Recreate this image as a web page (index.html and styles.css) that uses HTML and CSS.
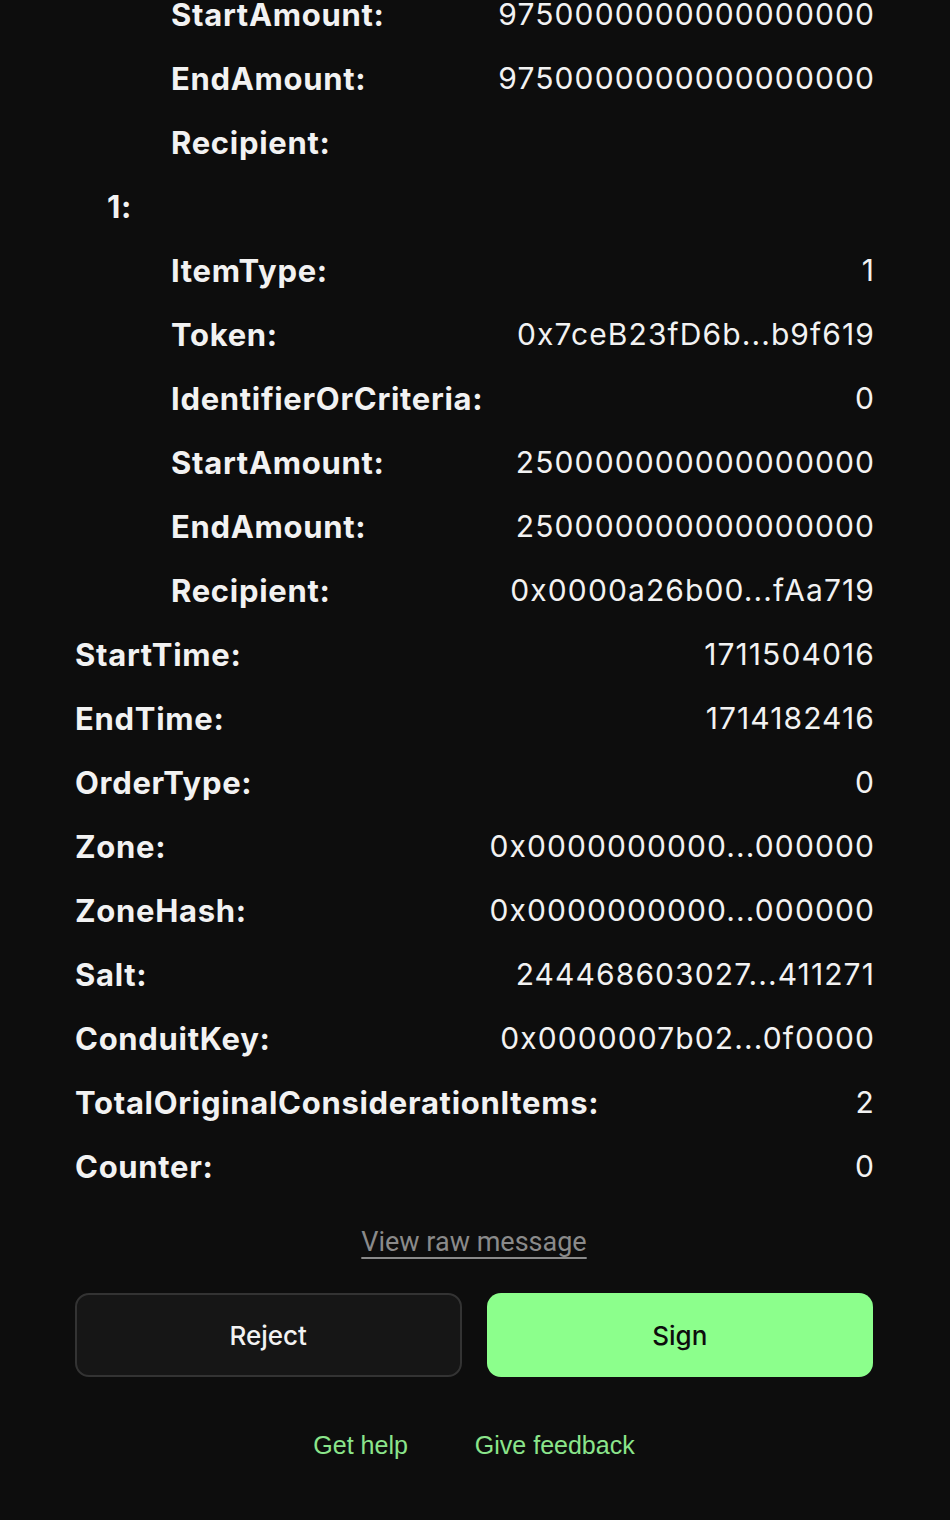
FILE: index.html
```html
<!DOCTYPE html>
<html lang="en">
<head>
    <meta charset="UTF-8">
    <meta name="viewport" content="width=device-width, initial-scale=1.0">
    <title>Sign message</title>
    <link rel="stylesheet" href="styles.css">
</head>
<body>
    <div class="page">
        <!-- Message fields -->
        <div class="fields">
            <div class="row level-2"><span class="label">StartAmount:</span><span class="value">9750000000000000000</span></div>
            <div class="row level-2"><span class="label">EndAmount:</span><span class="value">9750000000000000000</span></div>
            <div class="row level-2"><span class="label">Recipient:</span><span class="value"></span></div>
            <div class="row level-1"><span class="label">1:</span><span class="value"></span></div>
            <div class="row level-2"><span class="label">ItemType:</span><span class="value">1</span></div>
            <div class="row level-2"><span class="label">Token:</span><span class="value">0x7ceB23fD6b...b9f619</span></div>
            <div class="row level-2"><span class="label">IdentifierOrCriteria:</span><span class="value">0</span></div>
            <div class="row level-2"><span class="label">StartAmount:</span><span class="value">250000000000000000</span></div>
            <div class="row level-2"><span class="label">EndAmount:</span><span class="value">250000000000000000</span></div>
            <div class="row level-2"><span class="label">Recipient:</span><span class="value">0x0000a26b00...fAa719</span></div>
            <div class="row"><span class="label">StartTime:</span><span class="value">1711504016</span></div>
            <div class="row"><span class="label">EndTime:</span><span class="value">1714182416</span></div>
            <div class="row"><span class="label">OrderType:</span><span class="value">0</span></div>
            <div class="row"><span class="label">Zone:</span><span class="value">0x0000000000...000000</span></div>
            <div class="row"><span class="label">ZoneHash:</span><span class="value">0x0000000000...000000</span></div>
            <div class="row"><span class="label">Salt:</span><span class="value">244468603027...411271</span></div>
            <div class="row"><span class="label">ConduitKey:</span><span class="value">0x0000007b02...0f0000</span></div>
            <div class="row"><span class="label">TotalOriginalConsiderationItems:</span><span class="value">2</span></div>
            <div class="row"><span class="label">Counter:</span><span class="value">0</span></div>
        </div>

        <div class="raw-link-wrap">
            <a href="#" class="raw-link">View raw message</a>
        </div>

        <!-- Actions -->
        <div class="actions">
            <button class="btn btn-reject">Reject</button>
            <button class="btn btn-sign">Sign</button>
        </div>

        <div class="footer-links">
            <a href="#" class="footer-link">Get help</a>
            <a href="#" class="footer-link">Give feedback</a>
        </div>
    </div>
</body>
</html>
```

FILE: styles.css
```css
:root {
    --background: #0d0d0d;
    --foreground: #f2f2f2;
    --muted: #8a8a8a;
    --green: #8cff8c;
    --green-link: #8be58b;
    --card: #161616;
    --border: #333333;
}

body {
    margin: 0;
    padding: 0;
    background-color: var(--background);
    color: var(--foreground);
    font-family: 'Inter', 'Liberation Sans', sans-serif;
    height: 1520px;
    overflow: hidden;
}

.page {
    padding: 0 77px 0 75px;
}

/* Fields */
.fields {
    margin-top: -18px;
    display: flex;
    flex-direction: column;
}

.row {
    height: 64px;
    display: flex;
    align-items: center;
    justify-content: space-between;
}

.row.level-1 {
    padding-left: 32px;
}

.row.level-2 {
    padding-left: 96px;
}

.label {
    font-size: 31px;
    font-weight: 700;
    letter-spacing: 0.7px;
}

.value {
    font-size: 30px;
    font-weight: 400;
    letter-spacing: 1.1px;
    margin-right: -2px;
    white-space: nowrap;
}

/* Raw message link */
.raw-link-wrap {
    display: flex;
    justify-content: center;
    margin-top: 28px;
}

.raw-link {
    font-family: 'Roboto', sans-serif;
    font-size: 27px;
    color: var(--muted);
    text-decoration: underline;
    text-decoration-thickness: 2px;
    text-underline-offset: 6px;
}

/* Buttons */
.actions {
    display: grid;
    grid-template-columns: 1fr 1fr;
    gap: 25px;
    margin-top: 35px;
}

.btn {
    height: 84px;
    border-radius: 14px;
    font-family: 'Inter', sans-serif;
    font-size: 26px;
    font-weight: 500;
    cursor: pointer;
}

.btn-reject {
    background-color: var(--card);
    border: 2px solid var(--border);
    color: var(--foreground);
}

.btn-sign {
    background-color: var(--green);
    border: none;
    color: #0d0d0d;
}

/* Footer */
.footer-links {
    display: flex;
    justify-content: center;
    gap: 67px;
    margin-top: 54px;
}

.footer-link {
    font-family: 'Liberation Sans', sans-serif;
    font-size: 25px;
    color: var(--green-link);
    text-decoration: none;
}
```
